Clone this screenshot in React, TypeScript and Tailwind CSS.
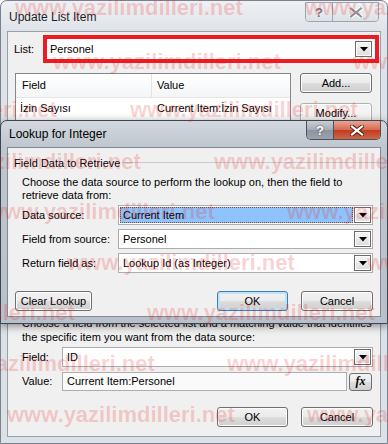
import React from "react";

const btn =
  "flex items-center justify-center h-[20px] rounded-[3px] border border-[#707070] bg-[linear-gradient(#f2f2f2_0%,#ebebeb_50%,#dddddd_51%,#cfcfcf_100%)] shadow-[inset_0_0_0_1px_#fcfcfc] text-[11px] text-black";
const okBtn =
  "flex items-center justify-center h-[20px] rounded-[3px] border border-[#3c7fb1] bg-[linear-gradient(#f2f2f2_0%,#ebebeb_50%,#dddddd_51%,#cfcfcf_100%)] shadow-[inset_0_0_0_2px_#bde3f8] text-[11px] text-black";

function Arrow() {
  return (
    <div className="w-[17px] h-[16px] border border-[#6b6b6b] bg-[linear-gradient(#f6f6f6,#dedede)] shadow-[inset_0_0_0_1px_#ffffff] flex items-center justify-center shrink-0">
      <svg width="8" height="5" viewBox="0 0 8 5">
        <path d="M0 0 L8 0 L4 4.5 Z" fill="#000" />
      </svg>
    </div>
  );
}

function Combo({ text, selected }: { text: string; selected?: boolean }) {
  return (
    <div className="flex-1 flex h-[20px] items-center border border-[#abadb3] bg-white pr-[1px]">
      {selected ? (
        <div className="flex-1 h-[16px] mx-[1px] flex items-center bg-[#8fc3fb] outline-1 outline-dotted outline-[#7a4a30] -outline-offset-1 pl-[3px] text-[11px]">
          {text}
        </div>
      ) : (
        <div className="flex-1 pl-[4px] text-[11px]">{text}</div>
      )}
      <Arrow />
    </div>
  );
}

function XGlyph({ color, stroke }: { color: string; stroke: string }) {
  return (
    <svg width="14" height="11" viewBox="0 0 14 11">
      <path
        d="M2 1.5 L12 9.5 M12 1.5 L2 9.5"
        stroke={stroke}
        strokeWidth="4.2"
        strokeLinecap="square"
        fill="none"
      />
      <path
        d="M2 1.5 L12 9.5 M12 1.5 L2 9.5"
        stroke={color}
        strokeWidth="2.2"
        strokeLinecap="square"
        fill="none"
      />
    </svg>
  );
}

const marks: [number, number][] = [
  [8, 15], [8, 305],
  [62, -247], [62, 53], [62, 353],
  [110, -171], [110, 130],
  [162, -87], [162, 214],
  [212, -13], [212, 287],
  [263, -233], [263, 67], [263, 367],
  [313, -153], [313, 147],
  [364, -73], [364, 227],
  [415, 7], [415, 307],
];

export default function App() {
  return (
    <div className="relative w-[388px] h-[444px] overflow-hidden bg-white font-['Liberation_Sans',Arial,sans-serif] text-[11px] text-black leading-[13px]">
      {/* Outer window */}
      <div className="flex flex-col w-[388px] h-[444px] border border-[#78838f] rounded-t-[7px] bg-[linear-gradient(#eef0f3,#dfe3e8_30px,#dce1e6)]">
        <div className="flex h-[30px] items-start justify-between">
          <div className="pl-[8px] pt-[9px] text-[12px] leading-[14px] text-[#1e1e1e]">Update List Item</div>
          <div className="flex mr-[8px] mt-[1px] h-[20px] border border-[#9aa5b1] rounded-b-[4px] overflow-hidden">
            <div className="w-[27px] flex items-center justify-center bg-[linear-gradient(#f0f2f4,#dde1e6)] border-r border-[#9aa5b1] text-[13px] font-bold text-[#6f7883] [text-shadow:0_0_2px_#fff]">?</div>
            <div className="w-[45px] flex items-center justify-center bg-[linear-gradient(#f0f2f4,#dde1e6)]">
              <XGlyph color="#8c96a1" stroke="#ffffff" />
            </div>
          </div>
        </div>
        <div className="flex-1 mx-[6px] mb-[6px] border border-[#95a1ae] bg-[#f0f0f0] flex flex-col">
          {/* List row */}
          <div className="flex items-center mt-[3px] pl-[6px] pr-[1px] h-[28px]">
            <div className="w-[29px]">List:</div>
            <div className="flex-1 h-[28px] border-4 border-[#ec1c24] bg-white flex items-center pl-[3px] pr-[3px]">
              <div className="flex-1 text-[11px]">Personel</div>
              <Arrow />
            </div>
          </div>
          {/* table + buttons */}
          <div className="flex mt-[10px] pl-[7px] pr-[8px] gap-[9px]">
            <div className="w-[276px] h-[230px] border border-[#828790] bg-white flex flex-col">
              <div className="flex h-[24px] border-b border-[#e5e5e5] bg-[linear-gradient(#ffffff,#f4f5f7)]">
                <div className="w-[136px] border-r border-[#e2e3ea] flex items-center pl-[6px]">Field</div>
                <div className="flex-1 flex items-center pl-[5px]">Value</div>
              </div>
              <div className="flex h-[20px] items-center">
                <div className="w-[136px] pl-[4px]">İzin Sayısı</div>
                <div className="flex-1 pl-[5px]">Current Item:İzin Sayısı</div>
              </div>
            </div>
            <div className="flex flex-col gap-[10px] w-[72px]">
              <div className={btn}>Add...</div>
              <div className={btn + " text-[#8a8a8a] border-[#adb2b5] bg-[#f4f4f4] bg-none"}>Modify...</div>
            </div>
          </div>
          {/* bottom text */}
          <div className="mt-[13px] pl-[14px] leading-[14px]">
            <div>Choose a field from the selected list and a matching value that identifies</div>
            <div>the specific item you want from the data source:</div>
          </div>
          <div className="flex items-center mt-[3px] pl-[14px] pr-[7px]">
            <div className="w-[40px]">Field:</div>
            <Combo text="ID" />
          </div>
          <div className="flex items-center mt-[5px] pl-[14px] pr-[8px] gap-[2px]">
            <div className="w-[38px]">Value:</div>
            <div className="flex-1 h-[19px] border border-[#abadb3] bg-[#fafafa] flex items-center pl-[4px]">Current Item:Personel</div>
            <div className="w-[23px] h-[18px] rounded-[3px] border border-[#707070] bg-[linear-gradient(#f2f2f2_0%,#ebebeb_50%,#dddddd_51%,#cfcfcf_100%)] flex items-center justify-center font-['Liberation_Serif',serif] italic font-bold text-[12px]">fx</div>
          </div>
          <div className="flex mt-[16px] pl-[209px] pr-[7px] gap-[13px]">
            <div className={btn + " w-[71px]"}>OK</div>
            <div className={btn + " w-[72px]"}>Cancel</div>
          </div>
        </div>
      </div>

      {/* Lookup window */}
      <div className="absolute left-0 top-[120px] w-[388px] h-[204px] flex flex-col border border-[#3d4650] rounded-t-[7px] bg-[linear-gradient(#d3d8de,#bfc6ce_26px,#b8c0c9)] shadow-[0_2px_8px_rgba(0,0,0,0.45)]">
        <div className="flex h-[26px] items-start justify-between">
          <div className="pl-[8px] pt-[6px] text-[12px] leading-[14px] text-black">Lookup for Integer</div>
          <div className="flex mr-[6px] h-[19px] border border-t-0 border-[#4a525c] rounded-b-[5px] overflow-hidden">
            <div className="w-[27px] flex items-center justify-center bg-[linear-gradient(#c9ced4,#a3abb4_50%,#8d96a0_51%,#9aa3ad)] border-r border-[#4a525c] text-[13px] font-bold text-white [text-shadow:0_0_2px_#333]">?</div>
            <div className="w-[46px] flex items-center justify-center bg-[linear-gradient(#e9a493,#d46a50_50%,#c03c1e_51%,#d26446)]">
              <XGlyph color="#ffffff" stroke="#5a2418" />
            </div>
          </div>
        </div>
        <div className="flex-1 mx-[6px] mb-[6px] border border-[#7f8a96] bg-[#f0f0f0] flex flex-col">
          <div className="flex items-center mt-[8px] pl-[6px] h-[14px]">
            <div className="pr-[2px]">Field Data to Retrieve</div>
            <div className="flex-1 h-[2px] border-t border-[#c7cbd0] border-b-white mt-[0px]" />
          </div>
          <div className="mt-[6px] pl-[14px] leading-[13px]">
            <div>Choose the data source to perform the lookup on, then the field to</div>
            <div>retrieve data from:</div>
          </div>
          <div className="flex flex-col gap-[4px] mt-[3px] pl-[14px] pr-[7px]">
            <div className="flex items-center">
              <div className="w-[96px]">Data source:</div>
              <Combo text="Current Item" selected />
            </div>
            <div className="flex items-center">
              <div className="w-[96px]">Field from source:</div>
              <Combo text="Personel" />
            </div>
            <div className="flex items-center">
              <div className="w-[96px]">Return field as:</div>
              <Combo text="Lookup Id (as Integer)" />
            </div>
          </div>
          <div className="flex mt-[18px] pl-[7px] pr-[7px]">
            <div className={btn + " w-[77px]"}>Clear Lookup</div>
            <div className="flex-1" />
            <div className={okBtn + " w-[71px]"}>OK</div>
            <div className={btn + " w-[72px] ml-[13px]"}>Cancel</div>
          </div>
        </div>
      </div>

      {/* Watermark overlay */}
      <div className="absolute inset-0 pointer-events-none">
        {marks.map(([y, x], i) => (
          <span
            key={i}
            className="absolute whitespace-nowrap font-['Liberation_Sans',Arial,sans-serif] font-bold text-[22px] leading-[26px] text-[rgba(235,20,20,0.2)]"
            style={{ top: y - 13, left: x }}
          >
            www.yazilimdilleri.net
          </span>
        ))}
      </div>
    </div>
  );
}
